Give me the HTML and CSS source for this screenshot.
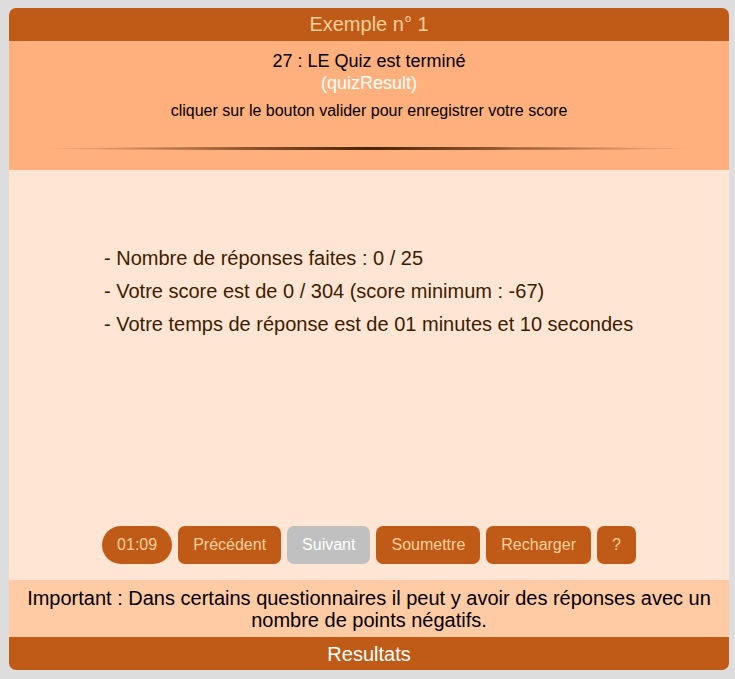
FILE: index.html
```html
<!DOCTYPE html>
<html lang="fr">
<head>
<meta charset="utf-8">
<title>Exemple n° 1</title>
<link rel="stylesheet" href="styles.css">
</head>
<body>
<div class="card">
  <div class="title">Exemple n° 1</div>
  <div class="head">
    <div class="q-title">27 : LE Quiz est terminé</div>
    <div class="q-id">(quizResult)</div>
    <div class="q-info">cliquer sur le bouton valider pour enregistrer votre score</div>
    <div class="rule"></div>
  </div>
  <div class="main">
    <ul class="results">
      <li>- Nombre de réponses faites : 0 / 25</li>
      <li>- Votre score est de 0 / 304 (score minimum : -67)</li>
      <li>- Votre temps de réponse est de 01 minutes et 10 secondes</li>
    </ul>
    <div class="buttons">
      <span class="btn timer">01:09</span>
      <span class="btn">Précédent</span>
      <span class="btn disabled">Suivant</span>
      <span class="btn">Soumettre</span>
      <span class="btn">Recharger</span>
      <span class="btn">?</span>
    </div>
  </div>
  <div class="note">Important : Dans certains questionnaires il peut y avoir des réponses avec un nombre de points négatifs.</div>
  <div class="foot">Resultats</div>
</div>
</body>
</html>
```
FILE: styles.css
```css
html, body {
  margin: 0;
  padding: 0;
  background: #dddddd;
}
body {
  padding: 8px 6px 9px 9px;
  font-family: "Liberation Sans", Arial, sans-serif;
}
.card {
  width: 720px;
  border-radius: 7px;
  overflow: hidden;
  background: #ffe5d4;
}
.title {
  background: #c05a17;
  color: #ffcf9c;
  text-align: center;
  font-size: 20px;
  height: 33px;
  line-height: 33px;
}
.head {
  background: #ffb07c;
  height: 129px;
  text-align: center;
  display: flex;
  flex-direction: column;
  align-items: center;
  padding-top: 9px;
  box-sizing: border-box;
}
.q-title {
  font-size: 18px;
  color: #000;
  line-height: 22px;
}
.q-id {
  font-size: 18px;
  color: #ffffff;
  line-height: 22px;
}
.q-info {
  font-size: 16px;
  color: #000;
  line-height: 20px;
  margin-top: 7px;
}
.rule {
  width: 650px;
  height: 3px;
  margin-top: 26px;
  background: linear-gradient(to right, rgba(90,40,10,0) 0%, rgba(90,40,10,0.55) 25%, #4a2408 50%, rgba(90,40,10,0.55) 75%, rgba(90,40,10,0) 100%);
  border-radius: 50%;
}
.main {
  height: 410px;
  display: flex;
  flex-direction: column;
  align-items: center;
  box-sizing: border-box;
  padding-top: 72px;
}
.results {
  list-style: none;
  margin: 0;
  padding: 0 0 0 95px;
  align-self: stretch;
  color: #3d1c00;
  font-size: 20px;
  line-height: 33px;
  flex: 1;
}
.buttons {
  display: flex;
  gap: 6px;
  margin-bottom: 16px;
}
.btn {
  background: #c05a17;
  color: #ffcf9c;
  font-size: 16px;
  height: 38px;
  line-height: 38px;
  padding: 0 15px;
  border-radius: 7px;
}
.timer {
  border-radius: 19px;
  padding: 0 15px;
}
.disabled {
  background: #c0c0c0;
  color: #ffffff;
}
.note {
  background: #ffcba4;
  color: #000;
  font-size: 20px;
  line-height: 22px;
  text-align: center;
  padding: 7px 10px 5px;
  height: 57px;
  box-sizing: border-box;
}
.foot {
  background: #c05a17;
  color: #ffffff;
  text-align: center;
  font-size: 20px;
  height: 33px;
  line-height: 34px;
}
```
